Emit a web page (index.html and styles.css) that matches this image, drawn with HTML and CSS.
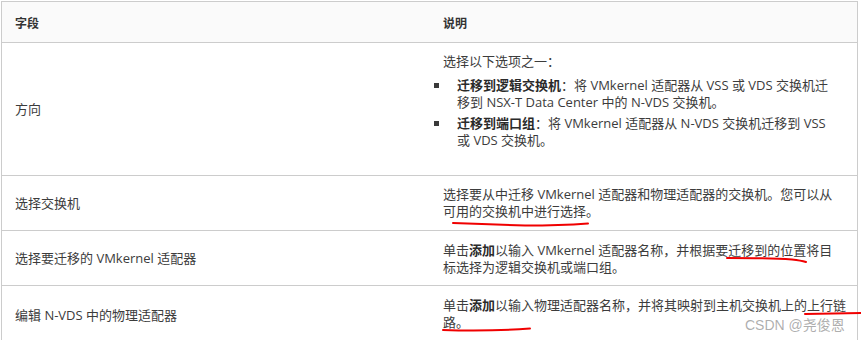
FILE: index.html
```html
<!DOCTYPE html>
<html lang="zh-CN">
<head>
<meta charset="utf-8">
<link rel="stylesheet" href="styles.css">
</head>
<body>
<div class="page">
  <table class="tbl">
    <thead>
      <tr><th class="c1">字段</th><th class="c2">说明</th></tr>
    </thead>
    <tbody>
      <tr class="r1">
        <td class="c1">方向</td>
        <td class="c2">
          <p class="lead">选择以下选项之一<span class="pc">：</span></p>
          <ul class="opts">
            <li><span><b>迁移到逻辑交换机</b><span class="pc">：</span>将 VMkernel 适配器从 VSS 或 VDS 交换机迁<br>移到 NSX-T Data Center 中的 N-VDS 交换机。</span></li>
            <li><span><b>迁移到端口组</b><span class="pc">：</span>将 VMkernel 适配器从 N-VDS 交换机迁移到 VSS<br>或 VDS 交换机。</span></li>
          </ul>
        </td>
      </tr>
      <tr class="r2">
        <td class="c1">选择交换机</td>
        <td class="c2">选择要从中迁移 VMkernel 适配器和物理适配器的交换机。您可以从<br>可用的交换机中进行选择。</td>
      </tr>
      <tr class="r3">
        <td class="c1">选择要迁移的 VMkernel 适配器</td>
        <td class="c2">单击<b>添加</b>以输入 VMkernel 适配器名称<span class="pc">，</span>并根据要迁移到的位置将目<br>标选择为逻辑交换机或端口组。</td>
      </tr>
      <tr class="r4">
        <td class="c1">编辑 N-VDS 中的物理适配器</td>
        <td class="c2">单击<b>添加</b>以输入物理适配器名称<span class="pc">，</span>并将其映射到主机交换机上的上行链<br>路。</td>
      </tr>
    </tbody>
  </table>
  <svg class="marks" width="861" height="340" viewBox="0 0 861 340">
    <g fill="none" stroke="#f00000" stroke-width="2" stroke-linecap="round">
      <path d="M453 223 Q 490 224.5 525 225.5 Q 560 225.5 588 223.5"/>
      <path d="M727 258 Q 770 258 792 259.5 Q 801 260.5 806 262"/>
      <path d="M805 314 Q 830 313.5 861 313"/>
      <path d="M443 330 Q 490 331.5 530 328.5"/>
    </g>
  </svg>
  <div class="wm">CSDN @尧俊恩</div>
</div>
</body>
</html>
```

FILE: styles.css
```css
html, body {
  margin: 0;
  padding: 0;
  background: #ffffff;
}

.page {
  position: relative;
  width: 861px;
  height: 340px;
  overflow: hidden;
  font-family: "Open Sans", "Noto Sans CJK SC", sans-serif;
  color: #3c3c3c;
}

.tbl {
  margin: 1px 0 0 1px;
  width: 857px;
  border-collapse: collapse;
  border: 1px solid #cccccc;
  table-layout: fixed;
}

.tbl th,
.tbl td {
  text-align: left;
  padding: 0;
  border-bottom: 1px solid #cccccc;
}

.tbl thead th {
  height: 38px;
  background: #fafafa;
  font-size: 12px;
  font-weight: 700;
  color: #333333;
  line-height: 17px;
  vertical-align: middle;
  padding-top: 2px;
}

.tbl th.c1, .tbl td.c1 {
  width: 415px;
  padding-left: 13px;
}

.tbl th.c2, .tbl td.c2 {
  padding-left: 13px;
  padding-right: 2px;
  white-space: nowrap;
}

.tbl td {
  font-size: 13px;
  line-height: 16.5px;
  vertical-align: middle;
}

.tbl td.c2 {
  vertical-align: top;
}

.tbl b {
  font-weight: 700;
  color: #2a2a2a;
}

.pc {
  font-family: "Noto Sans CJK TC", "Noto Sans CJK SC", sans-serif;
  line-height: 0;
}

.r1 td.c2 { padding-top: 10px; padding-bottom: 26px; }
.r2 td.c2 { padding-top: 10px; padding-bottom: 11px; }
.r3 td.c2 { padding-top: 11px; padding-bottom: 10px; }
.r4 td.c2 { padding-top: 11px; padding-bottom: 14px; }

.lead {
  margin: 0 0 7px 0;
  line-height: 17px;
}

.opts {
  list-style: none;
  margin: 0;
  padding: 0;
}

.opts li {
  display: flex;
  line-height: 17px;
}

.opts li + li {
  margin-top: 4px;
}

.opts li::before {
  content: "";
  flex: none;
  width: 5px;
  height: 5px;
  background: #3a3a3a;
  margin: 6px 18px 0 -9px;
}

.marks {
  position: absolute;
  left: 0;
  top: 0;
  pointer-events: none;
}

.wm {
  position: absolute;
  left: 745px;
  top: 316px;
  font-family: "Liberation Sans", "Noto Sans CJK SC", sans-serif;
  font-size: 14px;
  line-height: 18px;
  color: rgba(120, 120, 120, 0.6);
  white-space: nowrap;
}
```
